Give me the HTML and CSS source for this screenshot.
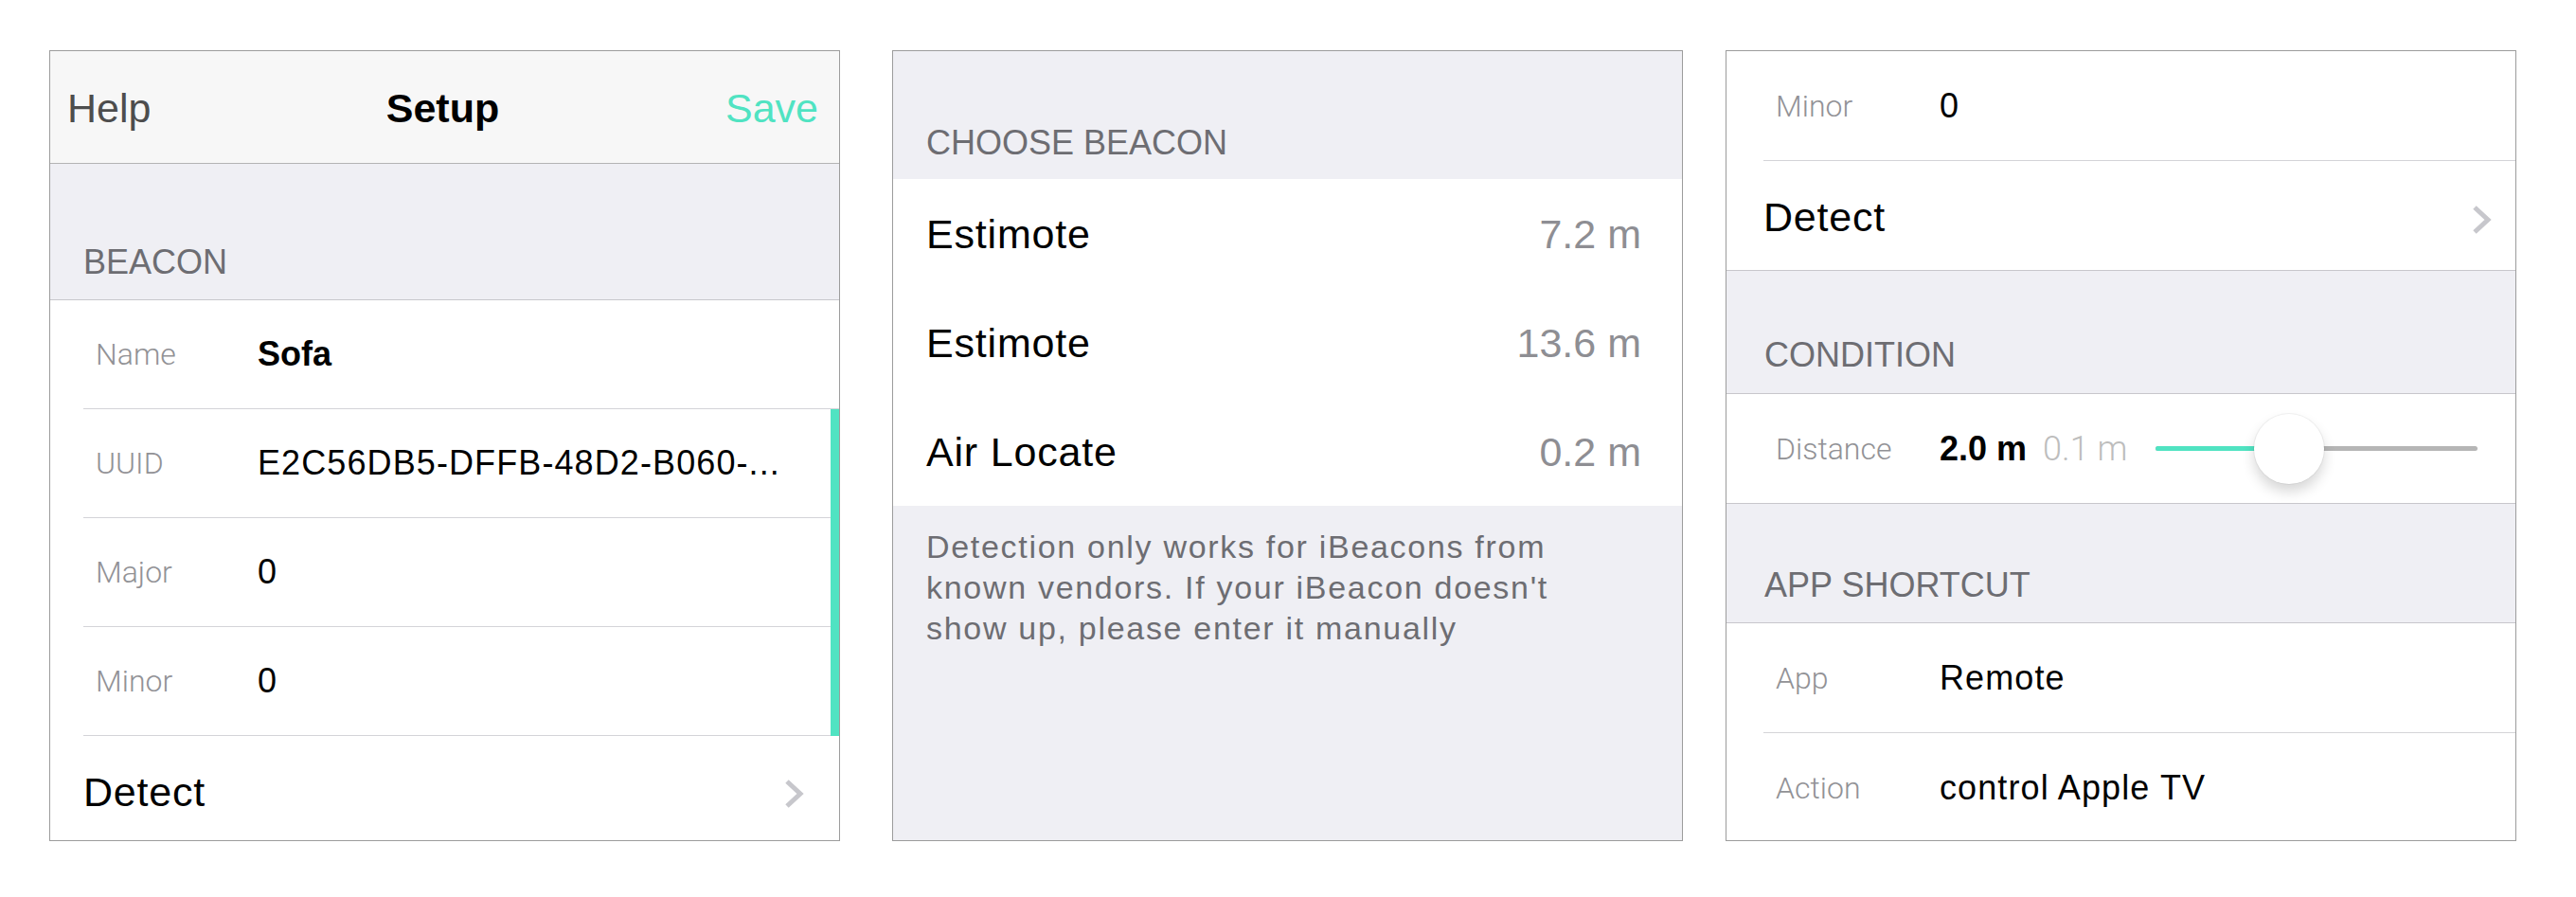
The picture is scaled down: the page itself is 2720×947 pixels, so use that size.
FILE: index.html
```html
<!DOCTYPE html>
<html lang="en">
<head>
<meta charset="utf-8">
<title>Beacon setup</title>
<link rel="stylesheet" href="styles.css">
</head>
<body>
<div class="screens">

  <section class="screen screen--setup">
    <header class="navbar">
      <span class="nav-btn">Help</span>
      <h1 class="nav-title">Setup</h1>
      <span class="nav-btn nav-btn--primary">Save</span>
    </header>
    <div class="group-header group-header--first">BEACON</div>
    <div class="group group--open">
      <div class="cell">
        <span class="cell-label">Name</span>
        <span class="cell-value cell-value--bold">Sofa</span>
      </div>
      <div class="cell-block cell-block--active">
        <div class="cell">
          <span class="cell-label">UUID</span>
          <span class="cell-value">E2C56DB5-DFFB-48D2-B060-...</span>
        </div>
        <div class="cell">
          <span class="cell-label">Major</span>
          <span class="cell-value">0</span>
        </div>
        <div class="cell">
          <span class="cell-label">Minor</span>
          <span class="cell-value">0</span>
        </div>
      </div>
      <div class="cell cell--action">
        <span class="cell-title">Detect</span>
        <svg class="chevron" viewBox="0 0 22 32" width="22" height="32" aria-hidden="true"><polyline points="3,3 17,16 3,29" fill="none" stroke="#c7c7cc" stroke-width="5"/></svg>
      </div>
    </div>
  </section>

  <section class="screen screen--choose">
    <div class="group-header group-header--choose">CHOOSE BEACON</div>
    <div class="plain-list">
      <div class="plain-row"><span class="cell-title">Estimote</span><span class="cell-detail">7.2 m</span></div>
      <div class="plain-row"><span class="cell-title">Estimote</span><span class="cell-detail">13.6 m</span></div>
      <div class="plain-row"><span class="cell-title">Air Locate</span><span class="cell-detail">0.2 m</span></div>
    </div>
    <div class="group-footer">
      <p class="footer-text">Detection only works for iBeacons from known vendors. If your iBeacon doesn't show up, please enter it manually</p>
    </div>
  </section>

  <section class="screen screen--condition">
    <div class="group group--clipped">
      <div class="cell">
        <span class="cell-label">Minor</span>
        <span class="cell-value">0</span>
      </div>
      <div class="cell cell--action">
        <span class="cell-title">Detect</span>
        <svg class="chevron" viewBox="0 0 22 32" width="22" height="32" aria-hidden="true"><polyline points="3,3 17,16 3,29" fill="none" stroke="#c7c7cc" stroke-width="5"/></svg>
      </div>
    </div>
    <div class="group-header group-header--condition">CONDITION</div>
    <div class="group">
      <div class="cell cell--slider">
        <span class="cell-label">Distance</span>
        <span class="cell-value cell-value--bold cell-value--auto">2.0 m</span>
        <span class="slider-min">0.1 m</span>
        <div class="slider">
          <div class="slider-fill" style="width: 41.4%"></div>
          <div class="slider-thumb" style="left: 41.4%"></div>
        </div>
      </div>
    </div>
    <div class="group-header group-header--shortcut">APP SHORTCUT</div>
    <div class="group group--open">
      <div class="cell">
        <span class="cell-label">App</span>
        <span class="cell-value">Remote</span>
      </div>
      <div class="cell">
        <span class="cell-label">Action</span>
        <span class="cell-value">control Apple TV</span>
      </div>
    </div>
  </section>

</div>
</body>
</html>
```

FILE: styles.css
```css
* { box-sizing: border-box; }

html, body {
  margin: 0;
  padding: 0;
  background: #ffffff;
}

body {
  font-family: "Liberation Sans", Arial, sans-serif;
  color: #000;
}

.screens {
  display: flex;
  align-items: flex-start;
  padding: 53px 0 0 52px;
}

.screen {
  flex: 0 0 auto;
  width: 835px;
  height: 835px;
  border: 1px solid #9c9c9c;
  background: #efeff4;
  overflow: hidden;
  display: flex;
  flex-direction: column;
  --inset: 35px;
  --label-w: 171px;
  --cell-h: 114px;
  --chev-pad: 36px;
}

.screen--choose { margin-left: 55px; }

.screen--condition {
  margin-left: 45px;
  --inset: 39px;
  --label-w: 173px;
  --cell-h: 115px;
  --chev-pad: 24px;
}

/* nav bar */
.navbar {
  flex: 0 0 auto;
  height: 119px;
  background: #f7f7f7;
  border-bottom: 1px solid #b4b4b4;
  display: grid;
  grid-template-columns: 1fr auto 1fr;
  align-items: center;
  padding: 2px 22px 0 18px;
}

.nav-btn {
  font-size: 43px;
  color: #4d4d4d;
}

.nav-btn--primary {
  justify-self: end;
  color: #50e3c2;
}

.nav-title {
  margin: 0;
  font-size: 43px;
  font-weight: bold;
  color: #000;
}

/* section headers */
.group-header {
  flex: 0 0 auto;
  display: flex;
  align-items: flex-end;
  padding: 0 0 21px var(--inset);
  font-size: 36px;
  line-height: 36px;
  color: #6d6d72;
}

.group-header--first { height: 143px; }
.group-header--choose { height: 135px; padding-bottom: 20px; }
.group-header--condition { height: 129px; padding-left: 40px; padding-bottom: 22px; }
.group-header--shortcut { height: 125px; padding-left: 40px; padding-bottom: 21px; }

/* grouped cells */
.group {
  flex: 0 0 auto;
  background: #fff;
  border-top: 1px solid #c8c7cc;
  border-bottom: 1px solid #c8c7cc;
}

.group--clipped { border-top: 0; }
.group--open { border-bottom: 0; flex: 1 0 auto; }

.cell-block--active {
  border-right: 9px solid #50e3c2;
}

.cell {
  height: calc(var(--cell-h) + 1px);
  margin-left: var(--inset);
  padding-left: 13px;
  border-bottom: 1px solid #d4d4d8;
  display: flex;
  align-items: center;
  white-space: nowrap;
}

.group > .cell:last-child { border-bottom: 0; height: var(--cell-h); }

.cell-label {
  flex: 0 0 var(--label-w);
  font-family: Roboto, "Liberation Sans", sans-serif;
  font-weight: 300;
  font-size: 32px;
  color: #929296;
}

.cell-value {
  flex: 1 1 auto;
  min-width: 0;
  overflow: hidden;
  font-size: 36px;
  letter-spacing: 1.1px;
  color: #000;
}

.cell-value--bold { font-weight: bold; letter-spacing: 0; }
.cell-value--auto { flex: 0 0 auto; }

.cell--action {
  padding-left: 0;
  padding-top: 4px;
  padding-right: var(--chev-pad);
  justify-content: space-between;
}

.cell-title {
  font-size: 43px;
  letter-spacing: 0.8px;
  color: #000;
}

.chevron {
  display: block;
  flex: 0 0 auto;
  margin-top: 4px;
}

/* slider row */
.slider-min {
  flex: 0 0 auto;
  margin-left: 17px;
  font-family: Roboto, "Liberation Sans", sans-serif;
  font-weight: 300;
  font-size: 36px;
  color: #bdbdbd;
}

.slider {
  position: relative;
  flex: 1 1 auto;
  height: 5px;
  margin: 0 40px 0 30px;
  border-radius: 3px;
  background: #b6b6b6;
}

.slider-fill {
  height: 100%;
  border-radius: 3px;
  background: #50e3c2;
}

.slider-thumb {
  position: absolute;
  top: 50%;
  width: 74px;
  height: 74px;
  border-radius: 50%;
  background: #fff;
  transform: translate(-50%, -50%);
  box-shadow: 0 0 0 1px rgba(0, 0, 0, 0.05), 0 8px 14px rgba(0, 0, 0, 0.16);
}

/* plain list (chooser) */
.plain-list {
  flex: 0 0 auto;
  background: #fff;
}

.plain-row {
  height: 115px;
  padding: 2px 43px 0 35px;
  display: flex;
  align-items: center;
  justify-content: space-between;
}

.cell-detail {
  font-size: 43px;
  color: #8e8e93;
}

.group-footer {
  flex: 1 1 auto;
  padding: 22px 35px 0 35px;
}

.footer-text {
  margin: 0;
  max-width: 720px;
  font-size: 34px;
  line-height: 43px;
  letter-spacing: 1.7px;
  color: #6d6d72;
}
```
